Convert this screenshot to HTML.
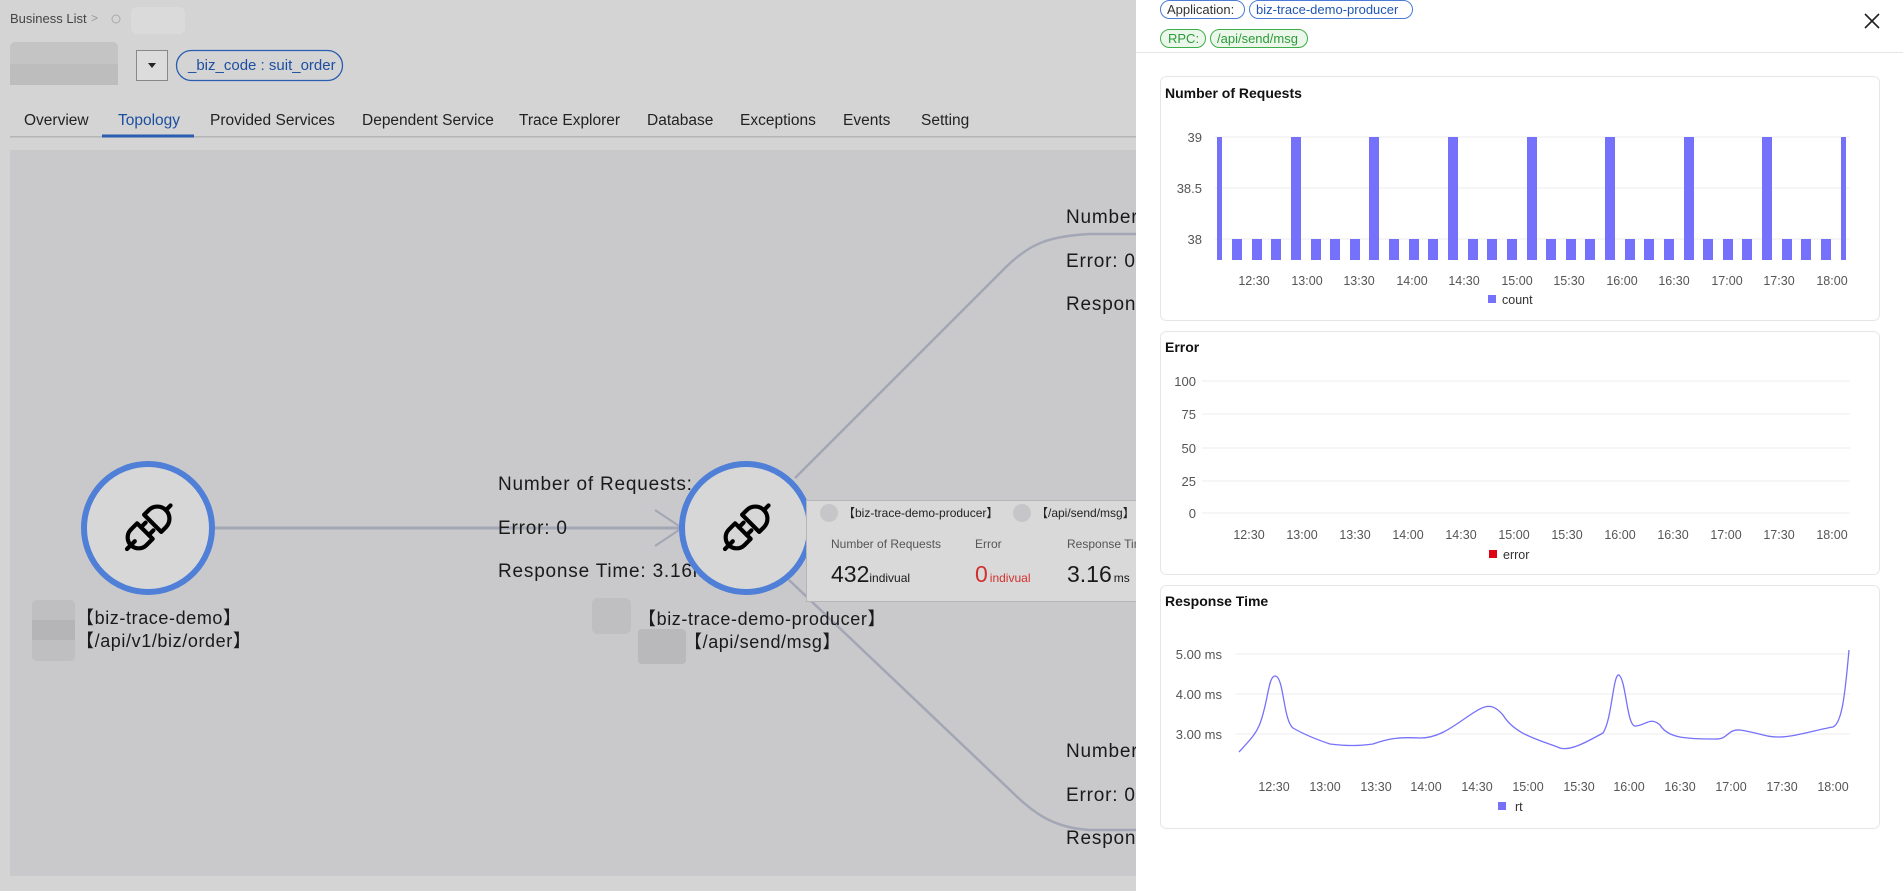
<!DOCTYPE html>
<html><head><meta charset="utf-8"><style>
html,body{margin:0;padding:0;width:1903px;height:891px;overflow:hidden;background:#d4d4d4;font-family:"Liberation Sans",sans-serif}
svg{position:absolute;left:0;top:0}
text{font-family:"Liberation Sans",sans-serif}
</style></head><body>
<svg width="1903" height="891" viewBox="0 0 1903 891" xmlns="http://www.w3.org/2000/svg">
<defs>
<g id="plug">
 <g transform="rotate(-45) scale(1.1)" fill="none" stroke="#000" stroke-width="3.8" stroke-linejoin="round" stroke-linecap="round">
  <path d="M-27,0 H-17"/>
  <path d="M-4,-10 H-12 A10 10 0 0 0 -12,10 H-4 Z"/>
  <path d="M-4,-5 H2 M-4,5 H2"/>
  <path d="M6,-11 H12 A11 11 0 0 1 12,11 H6 Z"/>
  <path d="M23,0 H29"/>
 </g>
</g>
<clipPath id="leftclip"><rect x="0" y="0" width="1136" height="891"/></clipPath>
</defs>
<rect x="0" y="0" width="1136" height="891" fill="#d4d4d4"/>
<text x="10" y="23" font-size="13" fill="#444">Business List</text>
<text x="91" y="22" font-size="12" fill="#999">&gt;</text>
<circle cx="116" cy="19" r="4" fill="none" stroke="#aaa" stroke-width="1"/>
<rect x="131" y="7" width="54" height="27" rx="6" fill="#dadada"/>
<rect x="10" y="42" width="108" height="43" rx="5" fill="#c4c4c4"/>
<rect x="10" y="64" width="108" height="21" fill="#bdbdbd"/>
<rect x="136.5" y="50.5" width="31" height="30" fill="#dcdcdc" stroke="#888"/>
<path d="M148,63 l4,5 l4,-5z" fill="#222"/>
<rect x="176.5" y="50.5" width="166" height="30" rx="15" fill="none" stroke="#2a5db0" stroke-width="1.3"/>
<text x="188" y="70" font-size="15" fill="#1d4fa0">_biz_code : suit_order</text>
<g font-size="15.5" fill="#222">
<text x="24" y="125">Overview</text>
<text x="118" y="125" fill="#1d4fa0">Topology</text>
<text x="210" y="125">Provided Services</text>
<text x="362" y="125">Dependent Service</text>
<text x="519" y="125">Trace Explorer</text>
<text x="647" y="125">Database</text>
<text x="740" y="125">Exceptions</text>
<text x="843" y="125">Events</text>
<text x="921" y="125">Setting</text>
</g>
<rect x="10" y="136" width="1126" height="1.5" fill="#b5b5b8"/>
<rect x="102" y="134.5" width="92" height="3" fill="#2a5db0"/>
<rect x="10" y="150" width="1126" height="726" fill="#c9c9cc"/>
<g clip-path="url(#leftclip)">
<line x1="215" y1="528" x2="680" y2="528" stroke="#a3a6b4" stroke-width="3"/>
<path d="M655,510 L682,528 L655,546" fill="none" stroke="#a3a6b4" stroke-width="2"/>
<path d="M795,478 L1005,268 C1030,243 1050,236 1090,234 L1136,234" fill="none" stroke="#a3a6b4" stroke-width="2.5"/>
<path d="M789,580 L1010,790 C1035,815 1055,828 1090,830 L1136,830" fill="none" stroke="#a3a6b4" stroke-width="2.5"/>
<g font-size="19" fill="#1a1a1a" letter-spacing="0.8">
<text x="498" y="490">Number of Requests:</text>
<text x="498" y="534">Error: 0</text>
<text x="498" y="577">Response Time: 3.16ms</text>
<text x="1066" y="223">Number of Requests:</text>
<text x="1066" y="267">Error: 0</text>
<text x="1066" y="310">Response Time</text>
<text x="1066" y="757">Number of Requests:</text>
<text x="1066" y="801">Error: 0</text>
<text x="1066" y="844">Response Time</text>
</g>
<circle cx="148" cy="528" r="64" fill="#d7d7d8" stroke="#4f7fd6" stroke-width="6"/>
<use href="#plug" x="148" y="528"/>
<circle cx="746" cy="528" r="64" fill="#d7d7d8" stroke="#4f7fd6" stroke-width="6"/>
<use href="#plug" x="746" y="528"/>
<rect x="32" y="600" width="43" height="61" rx="5" fill="#bfbfc1"/>
<rect x="32" y="620" width="43" height="20" fill="#b5b5b7"/>
<g font-size="18" fill="#1a1a1a" letter-spacing="0.6">
<text x="76" y="624">【biz-trace-demo】</text>
<text x="76" y="647">【/api/v1/biz/order】</text>
<text x="638" y="625">【biz-trace-demo-producer】</text>
<text x="684" y="648">【/api/send/msg】</text>
</g>
<rect x="592" y="598" width="39" height="36" rx="6" fill="#bfbfc1"/>
<rect x="638" y="629" width="48" height="35" rx="4" fill="#b9b9bb"/>
<rect x="806.5" y="500.5" width="340" height="101" fill="#d9d9da" stroke="#b5b5b8"/>
<circle cx="829" cy="513" r="9" fill="#c6c6c8"/>
<text x="843" y="517" font-size="12" fill="#222">【biz-trace-demo-producer】</text>
<circle cx="1022" cy="513" r="9" fill="#c6c6c8"/>
<text x="1036" y="517" font-size="12" fill="#222">【/api/send/msg】</text>
<g font-size="12" fill="#555">
<text x="831" y="548">Number of Requests</text>
<text x="975" y="548">Error</text>
<text x="1067" y="548">Response Time</text>
</g>
<text x="831" y="582" font-size="23" fill="#1a1a1a">432<tspan font-size="12">indivual</tspan></text>
<text x="975" y="582" font-size="23" fill="#d0312d">0<tspan font-size="12" dx="2">indivual</tspan></text>
<text x="1067" y="582" font-size="23" fill="#1a1a1a">3.16<tspan font-size="12" dx="2">ms</tspan></text>
</g>
<rect x="1136" y="0" width="767" height="891" fill="#fff"/>
<rect x="1160.5" y="0.5" width="84" height="18" rx="9" fill="#fff" stroke="#4a7bd5"/>
<text x="1167" y="14" font-size="13" fill="#333">Application:</text>
<rect x="1249.5" y="0.5" width="163" height="18" rx="9" fill="#fff" stroke="#4a7bd5"/>
<text x="1256" y="14" font-size="13" fill="#1f55b5">biz-trace-demo-producer</text>
<rect x="1160.5" y="29.5" width="45" height="18" rx="9" fill="#eaf7ea" stroke="#3fae4a"/>
<text x="1168" y="43" font-size="13" fill="#2e9a3a">RPC:</text>
<rect x="1210.5" y="29.5" width="97" height="18" rx="9" fill="#eaf7ea" stroke="#3fae4a"/>
<text x="1217" y="43" font-size="13" fill="#2e9a3a">/api/send/msg</text>
<path d="M1865,14 L1879,28 M1879,14 L1865,28" stroke="#222" stroke-width="1.6"/>
<rect x="1136" y="52" width="767" height="1" fill="#e5e5e5"/>

<rect x="1160.5" y="76.5" width="719" height="244" rx="6" fill="#fff" stroke="#e6e6e6"/>
<text x="1165" y="98" font-size="14" font-weight="bold" fill="#111">Number of Requests</text>
<g stroke="#ececec"><line x1="1215" y1="137" x2="1850" y2="137"/><line x1="1215" y1="188" x2="1850" y2="188"/><line x1="1215" y1="239" x2="1850" y2="239"/></g>
<g font-size="13" fill="#555" text-anchor="end"><text x="1202" y="142">39</text><text x="1202" y="193">38.5</text><text x="1202" y="244">38</text></g>
<g fill="#7671fa">
<rect x="1217" y="137" width="5" height="123"/>
<rect x="1232" y="239" width="10" height="21"/><rect x="1252" y="239" width="10" height="21"/><rect x="1271" y="239" width="10" height="21"/>
<rect x="1291" y="137" width="10" height="123"/>
<rect x="1311" y="239" width="10" height="21"/><rect x="1330" y="239" width="10" height="21"/><rect x="1350" y="239" width="10" height="21"/>
<rect x="1369" y="137" width="10" height="123"/>
<rect x="1389" y="239" width="10" height="21"/><rect x="1409" y="239" width="10" height="21"/><rect x="1428" y="239" width="10" height="21"/>
<rect x="1448" y="137" width="10" height="123"/>
<rect x="1468" y="239" width="10" height="21"/><rect x="1487" y="239" width="10" height="21"/><rect x="1507" y="239" width="10" height="21"/>
<rect x="1527" y="137" width="10" height="123"/>
<rect x="1546" y="239" width="10" height="21"/><rect x="1566" y="239" width="10" height="21"/><rect x="1585" y="239" width="10" height="21"/>
<rect x="1605" y="137" width="10" height="123"/>
<rect x="1625" y="239" width="10" height="21"/><rect x="1644" y="239" width="10" height="21"/><rect x="1664" y="239" width="10" height="21"/>
<rect x="1684" y="137" width="10" height="123"/>
<rect x="1703" y="239" width="10" height="21"/><rect x="1723" y="239" width="10" height="21"/><rect x="1742" y="239" width="10" height="21"/>
<rect x="1762" y="137" width="10" height="123"/>
<rect x="1782" y="239" width="10" height="21"/><rect x="1801" y="239" width="10" height="21"/><rect x="1821" y="239" width="10" height="21"/>
<rect x="1841" y="137" width="5" height="123"/>
</g>
<g font-size="12.5" fill="#555" text-anchor="middle">
<text x="1254" y="285">12:30</text><text x="1307" y="285">13:00</text><text x="1359" y="285">13:30</text><text x="1412" y="285">14:00</text><text x="1464" y="285">14:30</text><text x="1517" y="285">15:00</text><text x="1569" y="285">15:30</text><text x="1622" y="285">16:00</text><text x="1674" y="285">16:30</text><text x="1727" y="285">17:00</text><text x="1779" y="285">17:30</text><text x="1832" y="285">18:00</text>
</g>
<rect x="1488" y="295" width="8" height="8" fill="#7671fa"/>
<text x="1502" y="304" font-size="12.5" fill="#333">count</text>

<rect x="1160.5" y="331.5" width="719" height="243" rx="6" fill="#fff" stroke="#e6e6e6"/>
<text x="1165" y="352" font-size="14" font-weight="bold" fill="#111">Error</text>
<g stroke="#ececec"><line x1="1202" y1="381" x2="1850" y2="381"/><line x1="1202" y1="414" x2="1850" y2="414"/><line x1="1202" y1="448" x2="1850" y2="448"/><line x1="1202" y1="481" x2="1850" y2="481"/><line x1="1202" y1="513" x2="1850" y2="513"/></g>
<g font-size="13" fill="#555" text-anchor="end"><text x="1196" y="386">100</text><text x="1196" y="419">75</text><text x="1196" y="453">50</text><text x="1196" y="486">25</text><text x="1196" y="518">0</text></g>
<g font-size="12.5" fill="#555" text-anchor="middle">
<text x="1249" y="539">12:30</text><text x="1302" y="539">13:00</text><text x="1355" y="539">13:30</text><text x="1408" y="539">14:00</text><text x="1461" y="539">14:30</text><text x="1514" y="539">15:00</text><text x="1567" y="539">15:30</text><text x="1620" y="539">16:00</text><text x="1673" y="539">16:30</text><text x="1726" y="539">17:00</text><text x="1779" y="539">17:30</text><text x="1832" y="539">18:00</text>
</g>
<rect x="1489" y="550" width="8" height="8" fill="#e0000f"/>
<text x="1503" y="559" font-size="12.5" fill="#333">error</text>

<rect x="1160.5" y="585.5" width="719" height="243" rx="6" fill="#fff" stroke="#e6e6e6"/>
<text x="1165" y="606" font-size="14" font-weight="bold" fill="#111">Response Time</text>
<g stroke="#ececec"><line x1="1236" y1="654" x2="1850" y2="654"/><line x1="1236" y1="694" x2="1850" y2="694"/><line x1="1236" y1="734" x2="1850" y2="734"/></g>
<g font-size="13" fill="#555" text-anchor="end"><text x="1222" y="659">5.00 ms</text><text x="1222" y="699">4.00 ms</text><text x="1222" y="739">3.00 ms</text></g>
<path d="M1239,752 C1250,740 1255,735 1259,726 C1268,705 1268,676 1275,676 C1284,676 1283,720 1293,728 C1305,735 1318,740 1330,744 C1345,746 1360,746 1373,744 C1390,738 1400,737 1420,738 C1440,738 1455,725 1470,715 C1485,705 1492,702 1503,715 C1515,735 1540,740 1560,748 C1570,751 1585,743 1603,733 C1612,720 1613,673 1619,675 C1626,680 1627,726 1635,726 C1645,726 1650,716 1660,725 C1668,738 1685,739 1715,739 C1728,740 1727,729 1740,730 C1760,733 1765,737 1778,737 C1795,737 1815,730 1833,727 C1842,723 1845,695 1849,650" fill="none" stroke="#7671fa" stroke-width="1.3"/>
<g font-size="12.5" fill="#555" text-anchor="middle">
<text x="1274" y="791">12:30</text><text x="1325" y="791">13:00</text><text x="1376" y="791">13:30</text><text x="1426" y="791">14:00</text><text x="1477" y="791">14:30</text><text x="1528" y="791">15:00</text><text x="1579" y="791">15:30</text><text x="1629" y="791">16:00</text><text x="1680" y="791">16:30</text><text x="1731" y="791">17:00</text><text x="1782" y="791">17:30</text><text x="1833" y="791">18:00</text>
</g>
<rect x="1498" y="802" width="8" height="8" fill="#7671fa"/>
<text x="1515" y="811" font-size="12.5" fill="#333">rt</text>
</svg>
</body></html>
